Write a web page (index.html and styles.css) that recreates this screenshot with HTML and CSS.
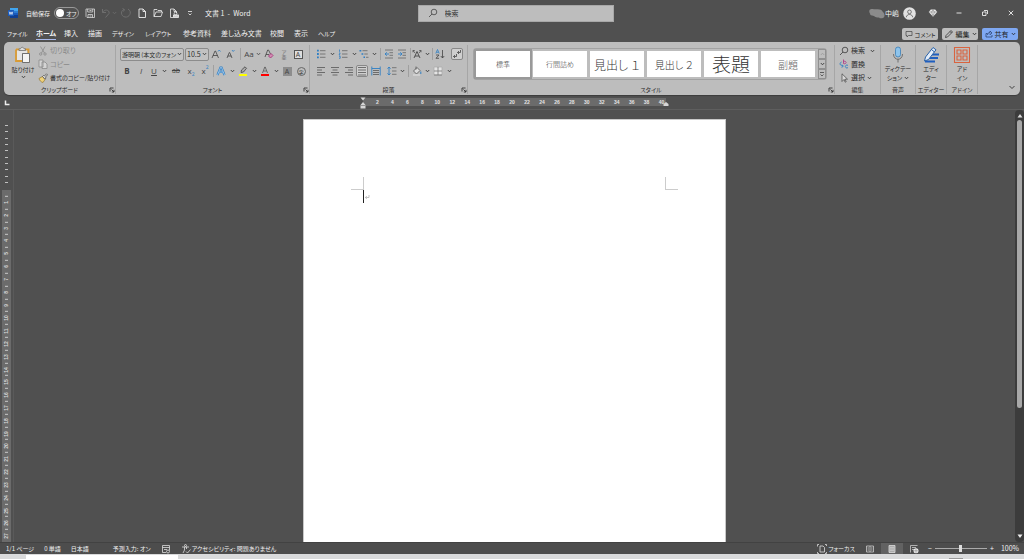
FILE: index.html
```html
<!DOCTYPE html>
<html lang="ja">
<head>
<meta charset="utf-8">
<meta name="viewport" content="width=device-width, initial-scale=1">
<title>文書 1 - Word</title>
<link rel="stylesheet" href="styles.css">
</head>
<body>
<svg class="sprite" aria-hidden="true">
  <symbol id="caret" viewBox="0 0 5 4"><path d="M.8 1 2.5 2.8 4.2 1" fill="none" stroke="currentColor" stroke-width=".8"/></symbol>
  <symbol id="launch" viewBox="0 0 6 6"><path d="M1 4.5V1h3.5M2.5 2.5 5 5M5 2.8V5H2.8" fill="none" stroke="#333" stroke-width=".9"/></symbol>
  <symbol id="search" viewBox="0 0 10 10"><circle cx="6" cy="4" r="2.8" fill="none" stroke="currentColor" stroke-width=".7"/><path d="M4 6 1 9" stroke="currentColor" stroke-width=".7"/></symbol>
  <symbol id="lines-left" viewBox="0 0 10 10"><path d="M1 1.5h8M1 4h5M1 6.5h8M1 9h5" stroke="#555" stroke-width=".8"/></symbol>
  <symbol id="lines-center" viewBox="0 0 10 10"><path d="M1 1.5h8M2.500 4h5M1 6.5h8M2.500 9h5" stroke="#555" stroke-width=".8"/></symbol>
  <symbol id="lines-right" viewBox="0 0 10 10"><path d="M1 1.5h8M4 4h5M1 6.5h8M4 9h5" stroke="#555" stroke-width=".8"/></symbol>
  <symbol id="lines-full" viewBox="0 0 10 10"><path d="M1 1.5h8M1 4h8M1 6.5h8M1 9h8" stroke="#555" stroke-width=".8"/></symbol>
</svg>

<header class="titlebar">
  <div class="title-left">
    <svg class="i12" viewBox="0 0 12 12"><path d="M3 1h8v3H3z" fill="#41a5ee"/><path d="M3 4h8v2H3z" fill="#2b7cd3"/><path d="M3 6h8v2H3z" fill="#185abd"/><path d="M3 8h8v3H3z" fill="#103f91"/><rect x="1" y="3" width="6" height="6" rx=".5" fill="#185abd"/><path d="m2.2 4.7.8 2.8 1-2.6 1 2.6.8-2.8" fill="none" stroke="#fff" stroke-width=".7"/></svg>
    <label class="autosave"><span>自動保存</span><input type="checkbox" class="hidden-check"><span class="switch"><i></i>オフ</span></label>
    <button aria-label="上書き保存"><svg class="i12" viewBox="0 0 12 12" fill="none" stroke="#d8d8d8" stroke-width=".8"><path d="M2 2h8.500v8.500H3L2 9.500zM3.700 2v3h5V2M4 10.500V7.500h4.500v3M5.500 3.500h2M5.500 9h2"/></svg></button>
    <button aria-label="元に戻す" class="faded wide"><svg class="i12" viewBox="0 0 12 12" fill="none" stroke="currentColor" stroke-width="1"><path d="M2.500 2v3.500H6M2.500 5.500C5 1.500 10 3 9 6.500L5.500 10.500"/></svg><svg class="caret"><use href="#caret"/></svg></button>
    <button aria-label="やり直し" class="faded"><svg class="i12" viewBox="0 0 12 12" fill="none" stroke="currentColor" stroke-width="1"><path d="M8 2c5 3 1 9-3 8C0 9 1 3 4 2.500M2.500 1.500l2 1-1 2"/></svg></button>
    <button aria-label="新規作成"><svg class="i12" viewBox="0 0 12 12" fill="none" stroke="#eee" stroke-width=".9"><path d="M3 2h4l2.500 2.500v6H3zM7 2v2.500h2.500"/></svg></button>
    <button aria-label="開く"><svg class="i12" viewBox="0 0 12 12" fill="none" stroke="#eee" stroke-width=".8"><path d="M2 9.500v-7h3l1 1h3.500V5M2 9.500 4 5h6.500L9 9.500z"/></svg></button>
    <button aria-label="印刷プレビュー"><svg class="i12" viewBox="0 0 12 12" fill="none" stroke="#eee" stroke-width=".8"><path d="M5 10.500H2.500V2H6l2.500 2.500V6M6 2v2.500h2.500"/><rect x="5.500" y="8" width="5" height="2.500" fill="#ccc"/><circle cx="7.500" cy="6.500" r="1.400"/></svg></button>
    <button aria-label="クイック アクセス ツール バーのユーザー設定"><svg class="i8" viewBox="0 0 8 8"><path d="M2 2.500h4M2.500 4.500 4 6l1.500-1.500" fill="none" stroke="#ddd" stroke-width=".9"/></svg></button>
    <h1>文書 1&nbsp; -&nbsp; Word</h1>
  </div>
  <label class="searchbox"><svg class="i10"><use href="#search"/></svg><input type="search" placeholder="検索" aria-label="検索"></label>
  <div class="title-right">
    <button class="account"><svg viewBox="0 0 16 12" class="smudge"><path d="M1 2.500c1-1 2-.5 3-.5 2 1 4-.5 6 .5 2-.5 3 1 4 2.500 2 2 2 5 0 6-2 .5-3 .5-4-.5-2 0-4 0-5-1.500C2 8.500 1 8 1 6.500 0 5 0 3.500 1 2.500z" fill="#8b8b8b"/></svg><span>中嶋</span><svg class="avatar" viewBox="0 0 12 12"><circle cx="6" cy="6" r="5.800" fill="#e2e2e2"/><circle cx="6" cy="4.500" r="1.700" fill="none" stroke="#555" stroke-width=".7"/><path d="M3 9.500c.5-3.500 5.500-3.500 6 0" fill="none" stroke="#555" stroke-width=".7"/></svg></button>
    <button aria-label="プレミアム"><svg class="i10" viewBox="0 0 10 10"><path d="M2.800 1.500h4.400L9.300 4 5 8.800.7 4z" fill="#e8e8e8"/><path d="M1 4h8M3.500 4 5 8l1.500-4L5 1.800 3.500 4" fill="none" stroke="#777" stroke-width=".5"/></svg></button>
    <button aria-label="最小化"><svg class="i10" viewBox="0 0 10 10"><path d="M2.500 5h5" stroke="#eee" stroke-width=".9"/></svg></button>
    <button aria-label="元に戻す (縮小)"><svg class="i10" viewBox="0 0 10 10" fill="none" stroke="#eee" stroke-width=".9"><path d="M2.500 4h3.500v3.500H2.500zM4 2.500h3.500V6"/></svg></button>
    <button aria-label="閉じる"><svg class="i10" viewBox="0 0 10 10"><path d="m2.800 2.800 4.400 4.400m0-4.400L2.800 7.200" stroke="#eee" stroke-width=".9"/></svg></button>
  </div>
</header>

<nav class="tabbar">
  <div class="tabs">
    <button class="kana">ファイル</button><button class="active">ホーム</button><button>挿入</button><button>描画</button><button class="kana">デザイン</button><button class="kana">レイアウト</button><button>参考資料</button><button>差し込み文書</button><button>校閲</button><button>表示</button><button class="kana">ヘルプ</button>
  </div>
  <div class="actions">
    <button class="kana"><svg class="i8" viewBox="0 0 8 8"><path d="M1 1.500h6V5.500H3.500L2 7V5.500H1z" fill="none" stroke="#444" stroke-width=".7"/></svg>コメント</button>
    <button><svg class="i10" viewBox="0 0 10 10"><path d="M1.500 8.500 2 6.500 7 1.500l1.500 1.500-5 5zM6 2.500 7.500 4" fill="none" stroke="#333" stroke-width=".8"/></svg>編集<svg class="caret"><use href="#caret"/></svg></button>
    <button class="share"><svg class="i8" viewBox="0 0 8 8"><path d="M2.500 3.500H1v3.500h6V5M2.500 5C2.500 3.500 3.500 2.500 5 2.500V1l2 2-2 1.700V3.500" fill="none" stroke="#223a66" stroke-width=".7"/></svg>共有<svg class="caret"><use href="#caret"/></svg></button>
  </div>
</nav>

<main class="app">
<section class="ribbon" aria-label="リボン">
  <section class="group clipboard">
    <div class="body">
      <button class="big"><svg class="i18" viewBox="0 0 18 18"><path d="M2 3.500h3M11 3.500h3.500V7M2 3.500V15h6" fill="none" stroke="#d99b34" stroke-width="1.800"/><path d="M3 4.500h10V7H8v7H3z" fill="#e4e4e4"/><path d="M5 4.500V2.800h1.500c.5-2 3-2 3.500 0H11.500v1.700z" fill="#ddd" stroke="#666" stroke-width=".7"/><path d="M8.500 7.500h7v9h-7z" fill="#f4f4f4" stroke="#555" stroke-width=".8"/></svg><span>貼り付け</span><svg class="caret"><use href="#caret"/></svg></button>
      <div class="stack">
        <button class="off"><svg class="i10" viewBox="0 0 10 10" fill="none" stroke="currentColor" stroke-width=".8"><path d="m2.500.500 4 6.500M7 .500 3.500 7"/><circle cx="2.700" cy="8" r="1.200"/><circle cx="7" cy="8" r="1.200"/></svg>切り取り</button>
        <button class="off"><svg class="i10" viewBox="0 0 10 10" fill="#d4d4d4" stroke="currentColor" stroke-width=".8"><path d="M1 1h4v7H1zM4 3h3l2 2v4.500H4z"/></svg>コピー</button>
        <button class="kana"><svg class="i10" viewBox="0 0 10 10"><path d="M1 5.500 4.500 3.500 7 6.500 5 9.500C3 9 1.500 7.500 1 5.500z" fill="#f0d27a" stroke="#8a6a20" stroke-width=".6"/><path d="m4.500 3.500 1-1L6.500 3 8.500.800l1 1L7.500 4l.5 1-1 1.200z" fill="#ddd" stroke="#444" stroke-width=".7"/></svg>書式のコピー/貼り付け</button>
      </div>
    </div>
    <footer><h2>クリップボード</h2><button class="launcher" aria-label="クリップボードの設定"><svg><use href="#launch"/></svg></button></footer>
  </section>

  <section class="group font">
    <div class="body rows">
      <div class="row">
        <div class="combo face"><select aria-label="フォント"><option>游明朝 (本文のフォン</option></select><svg class="caret"><use href="#caret"/></svg></div>
        <div class="combo size"><select aria-label="フォント サイズ"><option>10.5</option></select><svg class="caret"><use href="#caret"/></svg></div>
        <button class="w14" aria-label="フォント サイズの拡大"><svg class="i10" viewBox="0 0 10 10"><path d="M1 9 4 2h.5L7.500 9M2 6.500h4.500" fill="none" stroke="#444" stroke-width=".8"/><path d="m7 2.500 1.200-1.500L9.500 2.500" fill="none" stroke="#2f7fc4" stroke-width=".8"/></svg></button>
        <button class="w14" aria-label="フォント サイズの縮小"><svg class="i10" viewBox="0 0 10 10"><path d="M2 9 4.300 3.500h.4L7 9M2.800 7h3.500" fill="none" stroke="#444" stroke-width=".8"/><path d="m7 1 1.200 1.500L9.500 1" fill="none" stroke="#2f7fc4" stroke-width=".8"/></svg></button>
        <i class="sep s7"></i>
        <button class="w17 latin">Aa<svg class="caret"><use href="#caret"/></svg></button>
        <button class="w16" aria-label="書式のクリア"><svg class="i10" viewBox="0 0 10 10"><path d="M1 8 3.700 1h.8L6.500 5M2 5.500h3" fill="none" stroke="#444" stroke-width=".8"/><path d="m4.500 7 2.500-2.500 2 2L6.500 9z" fill="#d58ab4" stroke="#a33a78" stroke-width=".9"/></svg></button>
        <button class="w14 ruby" aria-label="ルビ"><small>ア</small><small>亜</small></button>
        <button class="w14 latin"><span class="boxed">A</span></button>
      </div>
      <div class="row">
        <button class="w14 latin"><b>B</b></button><button class="w14 latin"><em>I</em></button><button class="w12 latin"><u>U</u></button><button class="w8" aria-label="下線の種類"><svg class="caret"><use href="#caret"/></svg></button>
        <button class="w16 latin small"><s>ab</s></button><button class="w14 latin">x<sub>2</sub></button><button class="w14 latin">x<sup>2</sup></button><i class="sep s2"></i>
        <button class="w14" aria-label="文字の効果"><svg class="i10" viewBox="0 0 10 10"><path d="M1.500 9 4.500 1.500h1L8.500 9M3 6h4" fill="none" stroke="#2f7fc4" stroke-width="2.200"/><path d="M1.500 9 4.500 1.500h1L8.500 9M3 6h4" fill="none" stroke="#c5dcf0" stroke-width=".7"/></svg></button><button class="w8" aria-label="文字の効果の種類"><svg class="caret"><use href="#caret"/></svg></button>
        <button class="w14" aria-label="蛍光ペン"><svg class="i10" viewBox="0 0 10 10"><path d="M1 8h8v2H1z" fill="#ff0"/><path d="M3 6.500 3.500 4 7 .800l1.500 1.500L5.500 6z" fill="#aaa" stroke="#333" stroke-width=".7"/></svg></button><button class="w8" aria-label="蛍光ペンの色"><svg class="caret"><use href="#caret"/></svg></button>
        <button class="w14" aria-label="フォントの色"><svg class="i10" viewBox="0 0 10 10"><path d="M1 8h8v2H1z" fill="#f00"/><path d="M2.500 7 4.800 1h.4L7.500 7M3.500 5h3" fill="none" stroke="#555" stroke-width=".8"/></svg></button><button class="w8" aria-label="フォントの色の一覧"><svg class="caret"><use href="#caret"/></svg></button>
        <button class="w14 latin"><span class="shaded">A</span></button>
        <button class="w14"><span class="circled">字</span></button>
      </div>
    </div>
    <footer><h2>フォント</h2><button class="launcher" aria-label="フォントの設定"><svg><use href="#launch"/></svg></button></footer>
  </section>

  <section class="group paragraph">
    <div class="body rows">
      <div class="row">
        <button class="w14" aria-label="箇条書き"><svg class="i10" viewBox="0 0 10 10"><path d="M1 .800h1.800v1.800H1zM1 4.100h1.800v1.800H1zM1 7.400h1.800v1.800H1z" fill="#2f7fc4"/><path d="M4 1.700h5.500M4 5h5.500M4 8.300h5.500" stroke="#666" stroke-width=".8"/></svg></button><button class="w8" aria-label="行頭文字"><svg class="caret"><use href="#caret"/></svg></button>
        <button class="w14" aria-label="段落番号"><svg class="i10" viewBox="0 0 10 10"><path d="M1.500.500v2.300M1 4h1.200L1 6h1.200M1 7.300h1.200v2H1" fill="none" stroke="#2f7fc4" stroke-width=".8"/><path d="M4 1.700h5.500M4 5h5.500M4 8.300h5.500" stroke="#666" stroke-width=".8"/></svg></button><button class="w8" aria-label="番号書式"><svg class="caret"><use href="#caret"/></svg></button>
        <button class="w12" aria-label="アウトライン"><svg class="i10" viewBox="0 0 10 10"><path d="M.5 1h1.800v1.500H.5zM2.500 4.200h1.800v1.500H2.500zM4.500 7.500h1.500V9H4.500z" fill="#2f7fc4"/><path d="M3.500 1.700h5M5.300 5h3.500M7 8.300h2.500" stroke="#666" stroke-width=".8"/></svg></button><button class="w8" aria-label="リスト ライブラリ"><svg class="caret"><use href="#caret"/></svg></button>
        <i class="sep s5"></i>
        <button class="w12" aria-label="インデントを減らす"><svg class="i10" viewBox="0 0 10 10"><path d="M1 1h8M5.500 3.700H9M5.500 6.300H9M1 9h8" stroke="#666" stroke-width=".8"/><path d="M5 5H1m1.800-1.700L1 5l1.800 1.700" fill="none" stroke="#2f7fc4" stroke-width=".9"/></svg></button>
        <button class="w14" aria-label="インデントを増やす"><svg class="i10" viewBox="0 0 10 10"><path d="M1 1h8M5.500 3.700H9M5.500 6.300H9M1 9h8" stroke="#666" stroke-width=".8"/><path d="M1 5h4M3.200 3.300 5 5 3.200 6.700" fill="none" stroke="#2f7fc4" stroke-width=".9"/></svg></button>
        <i class="sep s2"></i>
        <button class="w12" aria-label="拡張書式"><svg class="i10" viewBox="0 0 10 10"><path d="m2 9 3-6.500L8 9M3 7h4" fill="none" stroke="#444" stroke-width=".9"/><path d="M1 1.500 3 4M1 1.500v1.800M1 1.500h1.800M9 1.500 7 4M9 1.500v1.800M9 1.500H7.200" stroke="#444" fill="none" stroke-width=".7"/></svg></button><button class="w8" aria-label="拡張書式の一覧"><svg class="caret"><use href="#caret"/></svg></button>
        <i class="sep s2"></i>
        <button class="w14" aria-label="並べ替え"><svg class="i10" viewBox="0 0 10 10"><path d="M.800 4.500 2.500.500l1.700 4M1.500 3.300h2" fill="none" stroke="#2f7fc4" stroke-width=".8"/><path d="M1 6h3L1 9.300h3M7.500 1v8M5.800 7l1.700 2 1.700-2" fill="none" stroke="#444" stroke-width=".8"/></svg></button>
        <button class="w12 pressed end" aria-label="編集記号の表示/非表示"><svg class="i10" viewBox="0 0 10 10"><path d="M8.500 1v2.500H5.500M7 2 5.500 3.500 7 5M4.500 5v2.500H1.500M3 6 1.500 7.500 3 9" fill="none" stroke="#444" stroke-width=".8"/></svg></button>
      </div>
      <div class="row">
        <button class="w14" aria-label="左揃え"><svg class="i10"><use href="#lines-left"/></svg></button><button class="w14" aria-label="中央揃え"><svg class="i10"><use href="#lines-center"/></svg></button><button class="w14" aria-label="右揃え"><svg class="i10"><use href="#lines-right"/></svg></button><button class="w12 pressed" aria-label="両端揃え"><svg class="i10"><use href="#lines-full"/></svg></button>
        <button class="w16" aria-label="均等割り付け"><svg class="i10" viewBox="0 0 10 10"><path d="M.800.500v9M9.200.500v9M1 2.500h8" stroke="#2f7fc4" stroke-width=".9"/><path d="M2 4.500h6M2 6.500h6M2 8.500h6" stroke="#555" stroke-width=".8"/></svg></button>
        <i class="sep s2 clear"></i>
        <button class="w12" aria-label="行間"><svg class="i10" viewBox="0 0 10 10"><path d="M2 1v8M.500 2.700 2 1l1.500 1.700M.500 7.300 2 9l1.500-1.700" fill="none" stroke="#2f7fc4" stroke-width=".9"/><path d="M5 1.700h4.500M5 5h4.500M5 8.300h4.500" stroke="#666" stroke-width=".8"/></svg></button><button class="w8" aria-label="行間の一覧"><svg class="caret"><use href="#caret"/></svg></button>
        <i class="sep s5"></i>
        <button class="w12" aria-label="塗りつぶし"><svg class="i10" viewBox="0 0 10 10"><path d="m1.500 5 3.500-3.500L8 4.500 4.500 8zM4 .500v3" fill="#ddd" stroke="#555" stroke-width=".8"/><path d="M8.800 5.500v2.500" stroke="#2f7fc4"/><path d="M1 9h7" stroke="#e4e4e4"/></svg></button><button class="w8" aria-label="塗りつぶしの色"><svg class="caret"><use href="#caret"/></svg></button>
        <button class="w14" aria-label="罫線"><svg class="i10" viewBox="0 0 10 10"><path d="M1 1h8v8H1z" fill="#e4e4e4" stroke="#aaa" stroke-width=".7"/><path d="M1 5h8M5 1v8M1 9h8" stroke="#777" stroke-width=".8"/></svg></button><button class="w8" aria-label="罫線の一覧"><svg class="caret"><use href="#caret"/></svg></button>
      </div>
    </div>
    <footer><h2>段落</h2><button class="launcher" aria-label="段落の設定"><svg><use href="#launch"/></svg></button></footer>
  </section>

  <section class="group styles">
    <div class="body">
      <div class="gallery">
        <button class="selected">標準</button><button>行間詰め</button><button class="h-one">見出し １</button><button class="h-two">見出し ２</button><button class="h-title">表題</button><button class="h-sub">副題</button>
        <div class="spin">
          <button aria-label="前の行" class="faint"><svg class="caret flip"><use href="#caret"/></svg></button>
          <button aria-label="次の行"><svg class="caret"><use href="#caret"/></svg></button>
          <button aria-label="その他"><svg class="i8" viewBox="0 0 8 8"><path d="M2 2.500h4M2.500 4.500 4 6l1.500-1.500" fill="none" stroke="#444" stroke-width=".8"/></svg></button>
        </div>
      </div>
    </div>
    <footer><h2>スタイル</h2><button class="launcher" aria-label="スタイルの設定"><svg><use href="#launch"/></svg></button></footer>
  </section>

  <section class="group edit">
    <div class="body"><div class="stack">
      <button><svg class="i10"><use href="#search"/></svg>検索<svg class="caret far"><use href="#caret"/></svg></button>
      <button><svg class="i10" viewBox="0 0 10 10" fill="none" stroke-width=".9"><path d="M4.500.500v4M4.500 3a1.300 1.300 0 1 1 0 1" stroke="#b0408a"/><path d="M9 6.500a1.500 1.500 0 1 0 0 2M2.500 3C0 4 1 7 4 7M2.800 5.500 4.300 7 2.800 8.700" stroke="#2f7fc4"/></svg>置換</button>
      <button><svg class="i10" viewBox="0 0 10 10"><path d="M3 .800v7.700l2-2 1.200 2.700 1-.500-1.200-2.500h2.500z" fill="#d8d8d8" stroke="#444" stroke-width=".7"/></svg>選択<svg class="caret"><use href="#caret"/></svg></button>
    </div></div>
    <footer><h2>編集</h2></footer>
  </section>

  <section class="group voice">
    <div class="body"><button class="big kana"><svg class="i18" viewBox="0 0 18 18"><rect x="6.500" y="1" width="5" height="10" rx="2.500" fill="#8ec4ec" stroke="#3a7fb8" stroke-width=".8"/><path d="M4.500 8c0 7 9 7 9 0M9 13v3.500" fill="none" stroke="#666" stroke-width=".9"/></svg><span>ディクテー</span><span>ション<svg class="caret"><use href="#caret"/></svg></span></button></div>
    <footer><h2>音声</h2></footer>
  </section>
  <section class="group editor">
    <div class="body"><button class="big kana"><svg class="i18" viewBox="0 0 18 18"><path d="M9 8.500h8M7 12h9M3 15.500h10" stroke="#1f5fc0" stroke-width="2"/><path d="M2.500 15 3.500 11 11 1.500l3 2.300-7.500 9.700z" fill="#e4eefa" stroke="#2a62a8" stroke-width="1"/><path d="M9.500 3.500 12.500 6" stroke="#2a62a8"/></svg><span>エディ</span><span>ター</span></button></div>
    <footer><h2>エディター</h2></footer>
  </section>
  <section class="group addin">
    <div class="body"><button class="big kana"><svg class="i18" viewBox="0 0 18 18"><path d="M1.500 1.500h15v15h-15zM4 4h4v4H4zM10 4h4v4h-4zM4 10h4v4H4zM10 10h4v4h-4z" fill="none" stroke="#d9633f" stroke-width="1.100"/></svg><span>アド</span><span>イン</span></button></div>
    <footer><h2>アドイン</h2></footer>
  </section>
  <div class="collapse"><button aria-label="リボンを折りたたむ"><svg class="i8" viewBox="0 0 8 8"><path d="m1.500 3 2.500 2.500L6.500 3" fill="none" stroke="#333" stroke-width=".9"/></svg></button></div>
</section>

<div class="ruler">
  <div class="tabstop"><svg class="i8" viewBox="0 0 8 8"><path d="M2.500 1.500v4h4" fill="none" stroke="#eee" stroke-width="1.500"/></svg></div>
  <div class="scale-wrap">
    <ol class="scale"><li>2</li><li>4</li><li>6</li><li>8</li><li>10</li><li>12</li><li>14</li><li>16</li><li>18</li><li>20</li><li>22</li><li>24</li><li>26</li><li>28</li><li>30</li><li>32</li><li>34</li><li>36</li><li>38</li><li>40</li></ol>
    <svg class="marker left" viewBox="0 0 6 12"><path d="M.500.500h5L3 3.500zM3 5 .500 8v3.500h5V8z" fill="#d6d6d6"/><path d="M.500 8.500h5" stroke="#666" stroke-width=".6"/></svg>
    <svg class="marker right" viewBox="0 0 6 12"><path d="M3 5 .500 7v2h5V7z" fill="#d6d6d6"/></svg>
  </div>
</div>

<div class="workspace">
  <div class="vruler">
    <div class="ticks"><i></i><i></i><i></i><i></i><i></i><i></i><i></i><i></i><i></i><i></i></div>
    <ol><li>1</li><li>2</li><li>3</li><li>4</li><li>5</li><li>6</li><li>7</li><li>8</li><li>9</li><li>10</li><li>11</li><li>12</li><li>13</li><li>14</li><li>15</li><li>16</li><li>17</li><li>18</li><li>19</li><li>20</li><li>21</li><li>22</li><li>23</li><li>24</li><li>25</li><li>26</li><li>27</li></ol>
  </div>
  <div class="canvas">
    <article class="page">
      <div class="crops"><i class="crop-l"></i><i class="crop-r"></i></div>
      <p><span class="cursor"></span><svg viewBox="0 0 6 6"><path d="M4 1v2.500H.500M1.800 2 .500 3.500 1.800 5" fill="none" stroke="#aaa" stroke-width=".7"/></svg></p>
    </article>
  </div>
  <div class="scroll">
    <svg class="i8" viewBox="0 0 8 8"><path d="M1.500 5.500 4 2l2.500 3.500z" fill="#ddd"/></svg>
    <div class="track"><div class="thumb"></div></div>
    <svg class="i8" viewBox="0 0 8 8"><path d="M1.500 2.500 4 6l2.500-3.500z" fill="#eee"/></svg>
  </div>
</div>
</main>

<footer class="status">
  <div class="status-left">
    <button>1/1 ページ</button><button>0 単語</button><button class="lang">日本語</button><button>予測入力: オン</button>
    <button aria-label="マクロ"><svg class="i10" viewBox="0 0 10 10" fill="none" stroke="#ddd" stroke-width=".8"><path d="M1.500 1.500h7v5M1.500 1.500v7H5M1.500 3.500h7M3 5.500h3"/><circle cx="7" cy="7.500" r="1.500"/></svg></button>
    <button class="access"><svg class="i10" viewBox="0 0 10 10" fill="none" stroke="#ddd" stroke-width=".8"><circle cx="4.500" cy="1.500" r="1"/><path d="M1 3h7M3.500 3v3L2 9M5.500 3v2M5 7.500l1.500 1.500 3-3.500"/></svg>アクセシビリティ: 問題ありません</button>
  </div>
  <div class="status-right">
    <button class="kana focus"><svg class="i10" viewBox="0 0 10 10" fill="none" stroke="#ddd" stroke-width=".8"><path d="M3 2h3l1.500 1.500V8H3zM.500 2.500v-2H2M8 .500h1.500V2M.500 8v1.500H2M8 9.500h1.500V8"/></svg>フォーカス</button>
    <button class="view" aria-label="閲覧モード"><svg class="i10" viewBox="0 0 10 10" fill="none" stroke="#ccc" stroke-width=".8"><path d="M1.500 2H5v6H1.500zM5 2h3.500v6H5M2.500 4H4M2.500 6H4M6 4h1.500M6 6h1.500"/></svg></button>
    <button class="view on" aria-label="印刷レイアウト"><svg class="i10" viewBox="0 0 10 10"><path d="M2 1.500h6v7H2z" fill="#aaa" stroke="#ddd" stroke-width=".8"/><path d="M3 3.500h4M3 5h4M3 6.500h4" stroke="#ddd" stroke-width=".5"/></svg></button>
    <button class="view" aria-label="Web レイアウト"><svg class="i10" viewBox="0 0 10 10"><path d="M1.500 8.500v-7h7M3 3.500h4M3 5.500h2" fill="none" stroke="#ccc" stroke-width=".8"/><circle cx="7" cy="6.800" r="2.500" fill="#eee"/><path d="M7 5v4M5 6.800h4" stroke="#777" stroke-width=".5"/></svg></button>
    <button class="zoom">−</button><input type="range" min="0" max="100" value="50" aria-label="ズーム"><button class="zoom">+</button>
    <button class="percent">100%</button>
  </div>
</footer>
<div class="underlay"><i class="sheet"></i><i class="dash"></i></div>
</body>
</html>
```

FILE: styles.css
```css
* { box-sizing: border-box; }
html, body { height: 100%; }
body {
  margin: 0;
  display: flex;
  flex-direction: column;
  background: #505050;
  color: #f0f0f0;
  font: 7px/9px "Noto Sans CJK JP", "Noto Sans", sans-serif;
  font-feature-settings: "palt";
  overflow: hidden;
}
button, input, select {
  font: inherit;
  font-feature-settings: inherit;
  color: inherit;
  background: none;
  border: 0;
  padding: 0;
  margin: 0;
}
button {
  display: flex;
  align-items: center;
  justify-content: center;
  white-space: nowrap;
}
h1, h2, p, ol { margin: 0; padding: 0; font-size: inherit; font-weight: inherit; list-style: none; }
svg { flex: none; display: block; }
.sprite { position: absolute; width: 0; height: 0; }
.i8 { width: 8px; height: 8px; }
.i10 { width: 10px; height: 10px; }
.i12 { width: 12px; height: 12px; }
.i18 { width: 18px; height: 18px; }
.caret { width: 5px; height: 4px; }
.kana { font-size: 6px; }

/* Title bar */
.titlebar {
  display: grid;
  grid-template-columns: 1fr 196px 1fr;
  align-items: center;
  height: 26px;
  padding-left: 7px;
}
.title-left, .title-right, .autosave { display: flex; align-items: center; }
.title-left button { width: 16px; }
.title-left .wide { width: 20px; }
.title-left .faded { color: #6e6e6e; }
.title-left h1 { margin-left: 7px; white-space: nowrap; }
.autosave { gap: 4px; margin: 0 3px 0 7px; white-space: nowrap; font-size: 6px; }
.hidden-check { position: absolute; opacity: 0; width: 1px; height: 1px; }
.switch {
  display: flex;
  align-items: center;
  gap: 2px;
  width: 25px;
  height: 12px;
  border: 1px solid #999;
  border-radius: 6px;
  padding-left: 1px;
}
.switch i { flex: none; width: 8px; height: 8px; border-radius: 50%; background: #fff; }
.searchbox {
  display: flex;
  align-items: center;
  gap: 7px;
  height: 17px;
  padding-left: 9px;
  border: 1px solid #a8a8a8;
  background: #bdbdbd;
  color: #333;
}
.searchbox input { flex: 1; min-width: 0; outline: 0; appearance: none; }
.searchbox input::placeholder { color: #333; }
.title-right { justify-content: flex-end; }
.title-right button { width: 26px; }
.title-right .account { width: auto; margin-right: 4px; }
.smudge { width: 16px; height: 12px; }
.avatar { width: 13px; height: 13px; margin-left: 4px; }

/* Tabs */
.tabbar { display: flex; justify-content: space-between; height: 16px; padding: 2px 6px 2px 7px; }
.tabs {
  display: grid;
  grid-template-columns: 29px 28px 24px 24px 33px 38px 38px 49px 24px 24px 24px;
  justify-items: start;
  align-items: start;
}
.tabs button { height: 12px; border-bottom: 1px solid transparent; }
.tabs .active { border-color: #a9b8ea; font-weight: bold; }
.actions { display: flex; gap: 4px; }
.actions button {
  width: 36px;
  height: 12px;
  gap: 2px;
  border-radius: 2px;
  background: #bdbdbd;
  color: #222;
}
.actions .share { background: #7fa8f2; }

/* Ribbon */
.app { flex: 1; min-height: 0; display: flex; flex-direction: column; }
.ribbon {
  display: flex;
  height: 53px;
  margin: 0 4px;
  padding: 3px 0 1px;
  border-radius: 5px;
  background: #bdbdbd;
  color: #2b2b2b;
  box-shadow: 0 1px 1px #3c3c3c;
}
.group {
  flex: none;
  display: flex;
  flex-direction: column;
  justify-content: space-between;
  border-right: 1px solid #a6a6a6;
}
.body { display: flex; padding: 0 4px; height: 39px; }
.rows { flex-direction: column; gap: 5px; padding-top: 3px; }
.row { display: flex; height: 12px; align-items: center; }
.group footer { display: flex; height: 9px; align-items: center; position: relative; }
.group h2 { flex: 1; text-align: center; font-size: 6px; white-space: nowrap; }
.launcher { position: absolute; right: 0; top: 2px; }
.launcher svg { width: 6px; height: 6px; }
.clipboard { width: 112px; }
.font { width: 194px; }
.paragraph { width: 158px; }
.styles { flex: 1; min-width: 0; }
.edit { width: 46px; }
.voice { width: 35px; }
.editor { width: 31px; }
.addin { width: 31px; }
.collapse { width: 42px; display: flex; align-items: flex-end; justify-content: flex-end; padding: 0 1px 3px; }
.collapse button { width: 14px; }
.big { flex-direction: column; justify-content: flex-start; width: 100%; padding-top: 1px; }
.big span { display: flex; align-items: center; gap: 2px; }
.clipboard .big { width: 30px; font-size: 6px; gap: 1px; }
.stack { display: flex; flex-direction: column; justify-content: space-between; padding: 0 0 1px; }
.stack button { height: 11px; gap: 2px; justify-content: flex-start; }
.stack .far { margin-left: 3px; }
.off { color: #8a8a8a; }
.voice .body, .editor .body, .addin .body { padding: 0; }
.combo { display: flex; align-items: center; height: 13px; border: 1px solid #8c8c8c; border-radius: 2px; padding: 0 1px; background: #c2c2c2; }
.combo select { flex: 1; min-width: 0; appearance: none; outline: 0; }
.face { width: 65px; margin-right: 1px; font-size: 6px; }
.size { width: 25px; }
.w8 { width: 8px; }
.w12 { width: 12px; }
.w14 { width: 14px; }
.w16 { width: 16px; }
.w17 { width: 17px; gap: 2px; }
.row button { flex: none; height: 12px; }
.latin { font: 8px/10px "Open Sans", "Noto Sans", sans-serif; color: #444; }
.latin.small { font-size: 7px; }
.latin sup, .latin sub { font-size: 5px; line-height: 5px; color: #2f7fc4; }
.latin sup { align-self: flex-start; }
.latin sub { align-self: flex-end; }
.ruby { flex-direction: column; }
.ruby small { font-size: 5px; line-height: 5px; color: #666; }
.boxed { width: 9px; height: 9px; line-height: 7px; font-size: 7px; border: 1px solid #555; background: #ddd; }
.shaded { width: 9px; height: 9px; line-height: 9px; font-size: 7px; background: #8d8d8d; }
.circled { width: 9px; height: 9px; line-height: 8px; font-size: 5px; border: 1px solid #666; border-radius: 50%; }
.sep { flex: none; height: 12px; background: linear-gradient(#a0a0a0, #a0a0a0) center / 1px 100% no-repeat; }
.s2 { width: 2px; }
.s5 { width: 5px; }
.s7 { width: 7px; }
.clear { background: none; }
.pressed { border: 1px solid #888; border-radius: 2px; background: #cfcfcf; }
.end { margin-left: auto; }
.styles .body { padding: 3px 7px 0 5px; }
.gallery {
  flex: 1;
  display: flex;
  gap: 3px;
  height: 32px;
  padding: 2px 0 2px 2px;
  border: 1px solid #a2a2a2;
  border-radius: 3px;
}
.gallery > button { flex: 1; background: #fff; color: #333; font-weight: 300; overflow: hidden; }
.gallery > .selected { outline: 2px solid #999; }
.gallery .h-one { font-size: 12px; }
.gallery .h-two { font-size: 10px; }
.gallery .h-title { font-size: 19px; line-height: 20px; }
.gallery .h-sub { font-size: 10px; color: #666; }
.spin { display: flex; flex-direction: column; width: 8px; margin: -2px 0; }
.spin button { flex: 1; border: 1px solid #909090; }
.spin .faint { color: #999; }
.flip { transform: rotate(180deg); }

/* Rulers */
.ruler { display: flex; height: 15px; padding: 3px 9px 0 0; border-bottom: 1px solid #5e5e5e; }
.tabstop { width: 14px; padding: 1px 0 0 3px; }
.scale-wrap { position: relative; width: 303px; height: 8px; margin: 0 auto; background: #6b6b6b; }
.scale { display: flex; margin-left: 7px; margin-right: -3px; }
.scale li { flex: 1; text-align: center; font: bold 5px/8px "Liberation Sans", sans-serif; color: #e4e4e4; }
.marker { position: absolute; top: -1px; width: 6px; height: 12px; }
.marker.left { left: -3px; }
.marker.right { right: -3px; }
.workspace { flex: 1; min-height: 0; display: flex; }
.vruler { display: flex; flex-direction: column; width: 14px; padding: 12px 2px 0; border-right: 1px solid #5a5a5a; }
.ticks { display: flex; flex-direction: column; justify-content: space-between; align-items: center; height: 64px; padding: 3px 0; }
.ticks i { width: 3px; height: 1px; background: #c0c0c0; }
.vruler ol { flex: 1; display: flex; flex-direction: column; margin-top: 4px; padding-top: 6px; background: #6b6b6b; }
.vruler li {
  flex: 1;
  display: flex;
  align-items: center;
  justify-content: center;
  writing-mode: vertical-rl;
  transform: rotate(180deg);
  border-style: solid;
  border-width: 0 0 1px;
  border-image: linear-gradient(90deg, transparent 33%, #c8c8c8 33%, #c8c8c8 67%, transparent 67%) 1;
  font: bold 5px/9px "Liberation Sans", sans-serif;
  color: #d8d8d8;
}

/* Document */
.canvas { flex: 1; display: flex; justify-content: center; padding-top: 9px; overflow: hidden; }
.page { width: 423px; padding: 57px 47px 0; background: #fff; border: 1px solid #c8c8c8; border-bottom: 0; }
.crops { display: flex; justify-content: space-between; }
.crops i { width: 13px; height: 13px; border-bottom: 1px solid #ccc; }
.crop-l { border-right: 1px solid #ccc; }
.crop-r { border-left: 1px solid #ccc; }
.page p { display: flex; align-items: center; gap: 1px; padding-left: 12px; height: 13px; }
.page p svg { width: 6px; height: 6px; }
.cursor { width: 1px; height: 13px; background: #222; }
.scroll { display: flex; flex-direction: column; align-items: center; width: 9px; padding: 2px 0; background: #3c3c3c; border-radius: 4px; }
.track { flex: 1; width: 5px; }
.thumb { height: 70%; border-radius: 3px; background: #a8a8a8; }

/* Status bar */
.status {
  display: flex;
  justify-content: space-between;
  height: 12px;
  padding: 0 5px 0 6px;
  border-top: 1px solid #424242;
  background: #4d4d4d;
}
.status-left, .status-right { display: flex; align-items: center; }
.status-left { gap: 10px; font-size: 6px; }
.lang { margin-right: 14px; }
.access { gap: 1px; }
.focus { gap: 1px; margin-right: 4px; }
.view { width: 22px; height: 11px; }
.view.on { background: #626262; }
.zoom { width: 10px; }
.status input { appearance: none; width: 52px; height: 9px; }
.status input::-webkit-slider-runnable-track { height: 1px; background: #aaa; }
.status input::-webkit-slider-thumb { appearance: none; width: 3px; height: 7px; margin-top: -3px; background: #ddd; }
.percent { margin-left: 4px; }
.underlay { display: flex; justify-content: space-between; height: 5px; background: #d9dadb; }
.sheet { width: 152px; margin: 1px 0 0 26px; background: #fff; }
.dash { width: 14px; height: 1px; margin: 4px 61px 0 0; background: #999; }
```
